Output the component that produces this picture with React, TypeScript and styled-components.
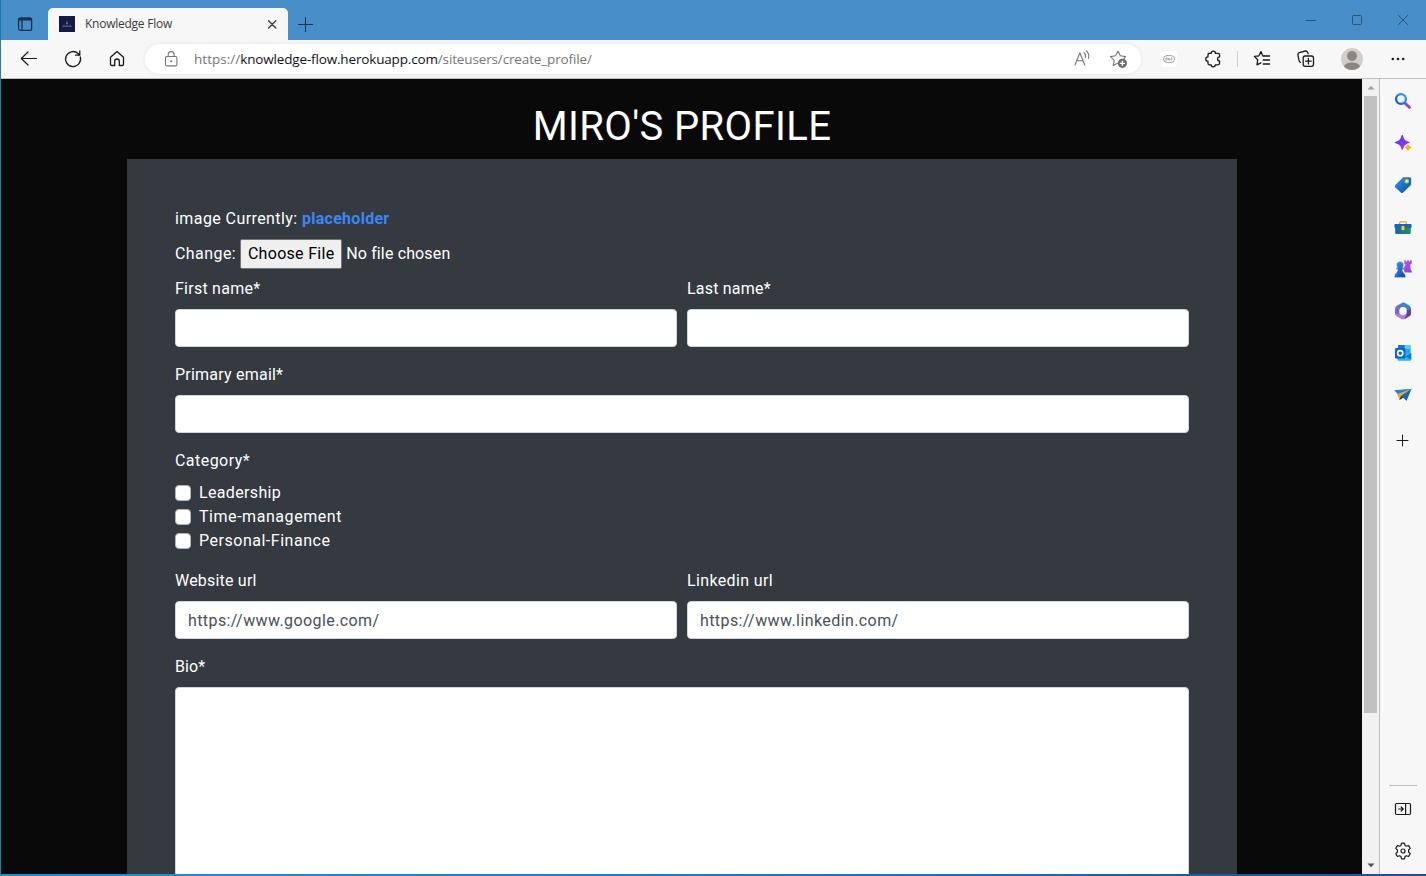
import React from "react";
import styled, { createGlobalStyle } from "styled-components";

const GlobalStyle = createGlobalStyle`
  *, *::before, *::after { box-sizing: border-box; }
  html, body { margin: 0; padding: 0; overflow: hidden; }
  svg { display: block; flex: none; }
`;

const ui = `"Open Sans", "Noto Sans", sans-serif`;
const site = `Roboto, "Liberation Sans", sans-serif`;

const Window = styled.div`
  width: 1426px;
  height: 876px;
  display: flex;
  flex-direction: column;
  border-left: 1px solid #1f7fa6;
  background: #f7f7f7;
  overflow: hidden;
  font-family: ${ui};
`;

const TitleBar = styled.header`
  height: 40px;
  flex: none;
  display: flex;
  align-items: flex-end;
  background: #488ec8;
  color: #17324a;
`;

const WorkspaceButton = styled.div`
  width: 47px;
  height: 32px;
  padding: 8px 0 0 16px;
`;

const Tab = styled.div`
  width: 240px;
  height: 32px;
  display: flex;
  align-items: center;
  padding: 0 10px 0 11px;
  border-radius: 5px 5px 0 0;
  background: #f7f7f7;
  color: #3b3b3b;
`;

const TabTitle = styled.span`
  flex: 1;
  margin-left: 10px;
  font-size: 12px;
  line-height: 16px;
  letter-spacing: -0.25px;
`;

const NewTab = styled.div`
  height: 32px;
  padding: 9px 0 0 10px;
`;

const WindowButtons = styled.div`
  margin-left: auto;
  align-self: flex-start;
  height: 40px;
  display: flex;
  align-items: center;
  gap: 34px;
  padding-right: 17px;
  color: #2c5678;
`;

const Toolbar = styled.div`
  height: 39px;
  flex: none;
  display: flex;
  align-items: center;
  background: #f7f7f7;
  border-bottom: 1px solid #bdbdbd;
  color: #1b1b1b;
`;

const NavButtons = styled.div`
  display: flex;
  width: 144px;
  padding-left: 18px;
  gap: 24px;
`;

const AddressBar = styled.div`
  width: 996px;
  height: 30px;
  display: flex;
  align-items: center;
  padding: 0 13px 0 17px;
  border-radius: 15px;
  background: #fff;
  box-shadow: 0 0 4px rgba(0, 0, 0, 0.08);
  color: #757575;
`;

const Url = styled.div`
  flex: 1;
  margin-left: 13px;
  padding-bottom: 1px;
  font-size: 13.5px;
  line-height: 20px;
  white-space: pre;
`;

const UrlPart = styled.span<{ $track: number; $host?: boolean }>`
  letter-spacing: ${(p) => p.$track}px;
  color: ${(p) => (p.$host ? "#111" : "#767676")};
`;

const AddressActions = styled.div`
  display: flex;
  gap: 16px;
`;

const ToolbarActions = styled.div`
  flex: 1;
  display: flex;
  align-items: center;
  padding-left: 20px;
`;

const Extension = styled.div`
  width: 16px;
  height: 16px;
  display: flex;
  align-items: center;
  justify-content: center;
  border-radius: 3px;
  background: #fff;
`;

const ToolSlot = styled.div<{ $gap: number }>`
  margin-left: ${(p) => p.$gap}px;
`;

const Divider = styled.div`
  width: 1px;
  height: 16px;
  margin-left: 14px;
  background: #cfcfcf;
`;

const Main = styled.div`
  flex: none;
  height: 795px;
  display: flex;
`;

const Page = styled.main`
  width: 1361px;
  flex: none;
  padding: 24px 125px 0 126px;
  overflow: hidden;
  background: #090909;
  color: #fff;
  font-family: ${site};
`;

const Heading = styled.h1`
  margin: 0 0 8px;
  text-align: center;
  font-size: 40px;
  line-height: 48px;
  font-weight: 400;
  letter-spacing: 0.38px;
`;

const Card = styled.form`
  height: 760px;
  padding: 48px;
  background: #343a40;
  font-size: 16px;
  line-height: 24px;
`;

const ImageLine = styled.div`
  margin-bottom: 8px;
`;

const ImageLink = styled.span`
  color: #3a86f4;
  font-weight: 700;
`;

const FileLine = styled.div`
  height: 30px;
  display: flex;
  align-items: center;
  gap: 4px;
  margin-bottom: 8px;
`;

const FileButton = styled.span`
  width: 102px;
  height: 30px;
  border: 1px solid #767676;
  border-radius: 2px;
  background: #efefef;
  color: #000;
  text-align: center;
  line-height: 28px;
`;

const FieldRow = styled.div`
  display: grid;
  grid-template-columns: 1fr 1fr;
  gap: 10px;
`;

const Field = styled.div`
  margin-bottom: 16px;
`;

const Label = styled.div`
  margin-bottom: 8px;
`;

const Txt = styled.span<{ $track?: number }>`
  letter-spacing: ${(p) => p.$track ?? 0.3}px;
  white-space: nowrap;
`;

const Input = styled.div<{ $height?: number }>`
  height: ${(p) => p.$height ?? 38}px;
  padding: 7px 12px 5px;
  border: 1px solid #ced4da;
  border-radius: 4px;
  background: #fff;
  color: #495057;
`;

const CheckRow = styled.div`
  height: 24px;
  display: flex;
  align-items: center;
  gap: 8px;
`;

const CheckBox = styled.span`
  width: 16px;
  height: 16px;
  border: 1px solid #adb5bd;
  border-radius: 4px;
  background: #fff;
`;

const ScrollTrack = styled.div`
  width: 17px;
  flex: none;
  display: flex;
  flex-direction: column;
  align-items: center;
  background: #f1f1f1;
`;

const ScrollArrow = styled.div`
  height: 17px;
  display: flex;
  align-items: center;
`;

const ScrollThumb = styled.div`
  width: 13px;
  height: 617px;
  margin-bottom: auto;
  background: #c1c1c1;
`;

const Sidebar = styled.aside`
  flex: 1;
  display: flex;
  flex-direction: column;
  align-items: center;
  padding-top: 13px;
  border-left: 1px solid #bdbdbd;
  background: #f7f7f7;
  color: #1b1b1b;
`;

const SideApps = styled.div`
  display: flex;
  flex-direction: column;
  gap: 24px;
  margin-bottom: 28px;
`;

const SideTools = styled.div`
  width: 28px;
  margin-top: auto;
  display: flex;
  flex-direction: column;
  align-items: center;
  gap: 24px;
  padding: 14px 0 14px;
  border-top: 1px solid #bdbdbd;
`;

const BottomEdge = styled.div`
  height: 2px;
  flex: none;
  background: linear-gradient(90deg, #1596cf, #1a7cc0 50%, #1a4f9e);
`;

const Icon = ({ size = 18, w = 1, children }: { size?: number; w?: number; children: React.ReactNode }) => (
  <svg width={size} height={size} viewBox={`0 0 ${size} ${size}`} fill="none" stroke="currentColor" strokeWidth={w} strokeLinecap="round" strokeLinejoin="round">
    {children}
  </svg>
);

const SearchIcon = () => (
  <Icon>
    <defs>
      <linearGradient id="lens" x1="0" y1="1" x2="1" y2="0">
        <stop stopColor="#1649c8" />
        <stop offset="1" stopColor="#3fa2ee" />
      </linearGradient>
    </defs>
    <path d="M11.4 11.6l4.2 3.8" stroke="#8a4bd6" strokeWidth="2.8" />
    <circle cx="7" cy="7" r="4.9" stroke="url(#lens)" strokeWidth="2.3" fill="#eaf6ff" />
  </Icon>
);

const SparkIcon = () => (
  <Icon>
    <defs>
      <linearGradient id="spark" x1="0" y1="0" x2="1" y2="1">
        <stop stopColor="#4b3fe0" />
        <stop offset="0.6" stopColor="#8a35ec" />
        <stop offset="1" stopColor="#c44be8" />
      </linearGradient>
    </defs>
    <path d="M8.2 .8Q9 .8 9.3 2.4Q10 6.4 14 7.4Q16 7.8 16 8.4T14 9.4Q10.2 10.4 9.3 14.2Q9 15.8 8.2 15.8T7.2 14.2Q6.4 10.4 2.4 9.4Q.6 9 .6 8.4T2.4 7.4Q6.4 6.4 7.2 2.4Q7.5 .8 8.2 .8Z" fill="url(#spark)" stroke="none" />
    <path d="M14 9.6Q15 12.6 18 13.6Q15 14.6 14 17.6Q13 14.6 10 13.6Q13 12.6 14 9.6Z" fill="#f7b50c" stroke="#f7f7f7" strokeWidth=".4" />
  </Icon>
);

const TagIcon = () => (
  <Icon>
    <defs>
      <linearGradient id="tag" x1="0" y1="0" x2="1" y2="1">
        <stop stopColor="#2f9be0" />
        <stop offset="1" stopColor="#0b4ba8" />
      </linearGradient>
    </defs>
    <path d="M9.2 1.2H15.8Q17.2 1.2 17.2 2.6V8.8L9.2 16.6Q8 17.6 6.8 16.6L1.3 11.4Q.2 10.2 1.3 9Z" fill="url(#tag)" stroke="none" />
    <circle cx="12.8" cy="5.2" r="1.6" fill="#fff2a8" stroke="#f0c419" strokeWidth="1.2" />
  </Icon>
);

const ToolboxIcon = () => (
  <Icon>
    <defs>
      <linearGradient id="box" x1="0" y1="0" x2="1" y2="0">
        <stop stopColor="#1560ba" />
        <stop offset="1" stopColor="#1c9a55" />
      </linearGradient>
    </defs>
    <path d="M5.6 6.4V4.8Q5.6 3.8 6.6 3.8H11.4Q12.4 3.8 12.4 4.8V6.4" stroke="#e7a726" strokeWidth="1.3" />
    <path d="M1.2 9H16.8V14.8Q16.8 16 15.6 16H2.4Q1.2 16 1.2 14.8Z" fill="url(#box)" stroke="none" />
    <rect x=".4" y="6" width="17.2" height="4" rx="1" fill="#1767bb" stroke="none" />
    <rect x="7.4" y="7.8" width="3.2" height="4.4" rx="1.3" fill="#f7c52e" stroke="none" />
  </Icon>
);

const ChessIcon = () => (
  <Icon>
    <defs>
      <linearGradient id="pawn" x1="0" y1="0" x2="1" y2="1">
        <stop stopColor="#3d9ae6" />
        <stop offset="1" stopColor="#0d47a3" />
      </linearGradient>
      <linearGradient id="rook" x1="0" y1="0" x2="1" y2="1">
        <stop stopColor="#c85bf0" />
        <stop offset="1" stopColor="#8a37d8" />
      </linearGradient>
    </defs>
    <path d="M10.2 .2H11.9V1.4H13.1V.2H14.9V1.4H16.1V.2H17.8V3.4L16.2 4.6L16.6 9.4L17.8 11.6V12.6H10.8L9.4 9L11.4 4.6L10.2 3.4Z" fill="url(#rook)" stroke="none" />
    <path d="M6 1.6A3.5 3.5 0 0 1 9.5 5.1Q9.5 6.6 8.4 7.6H9.8V9.2H8.4Q8.4 12 10.2 13.2Q11.6 14 11.6 17.6H.4Q.4 14 1.8 13.2Q3.6 12 3.6 9.2H2.2V7.6H3.6Q2.5 6.6 2.5 5.1A3.5 3.5 0 0 1 6 1.6Z" fill="url(#pawn)" stroke="#f7f7f7" strokeWidth=".3" />
  </Icon>
);

const OfficeIcon = () => (
  <Icon>
    <path d="M9 .4L3 3.6Q1 4.7 1 7V12Q2.5 14.8 5.6 13.2V7.4Q5.6 6.2 6.8 5.6L12.4 2.6Z" fill="#6a6fd0" stroke="none" />
    <path d="M1 11.6Q1.3 13.5 3 14.5L7.4 17Q9 17.8 10.6 17L16 13.8Q17 13 17 11.4L11.3 12.2L9 13.3L5.6 12Z" fill="#b57be0" stroke="none" />
    <path d="M9 .4Q10 .3 11 1L15.4 3.6Q17 4.7 17 7V11.6Q16 14.6 12.6 13.2V8Q12.6 6.4 11.2 5.6L6.6 4.4Z" fill="#3a86cc" stroke="none" />
    <path d="M12.6 8.6L17 7V12Q16.4 13.8 14.6 14.7L10.4 16.9L12.6 12.4Z" fill="#6b3f92" stroke="none" />
    <path d="M9 5.2L12.4 7.2V11L9 13L5.6 11V7.2Z" fill="#f7f7f7" stroke="none" />
  </Icon>
);

const OutlookIcon = () => (
  <Icon>
    <rect x="4.2" y="1" width="12.4" height="11" rx="1" fill="#2aa5e8" stroke="none" />
    <path d="M10.4 1H15.6Q16.6 1 16.6 2V5H10.4Z" fill="#55cdf5" stroke="none" />
    <path d="M4.2 1H10.4V5H4.2Z" fill="#1277c8" stroke="none" />
    <path d="M3.4 8.6L17.2 9.2V15.6Q17.2 16.8 16 16.8H4.6Q3.4 16.8 3.4 15.6Z" fill="#2ab6ee" stroke="none" />
    <path d="M17.2 9L11.5 12.6L17.2 15.8Z" fill="#137ac2" stroke="none" />
    <rect x="1" y="4" width="10.4" height="10.4" rx="1.2" fill="#0c68c4" stroke="none" />
    <circle cx="6.2" cy="9.2" r="2.6" stroke="#fff" strokeWidth="1.6" />
  </Icon>
);

const PlaneIcon = () => (
  <Icon>
    <path d="M.2 4.2L17.6 2.8L5 9.4Z" fill="#1e86d6" stroke="none" />
    <path d="M3.2 8.2L17.6 2.8L5.4 14Z" fill="#f5a81c" stroke="none" />
    <path d="M5.4 14.2L7 9.8L9.4 11.6Z" fill="#372a72" stroke="none" />
    <path d="M17.6 2.8L12.6 14.8L6.8 10Z" fill="#1268c0" stroke="none" />
  </Icon>
);

const PanelIcon = () => (
  <Icon w={1.2}>
    <rect x="1.5" y="3.5" width="15" height="11" rx="1.2" />
    <path d="M11.6 3.6V14.4M4.6 9H9M7.2 7L9.2 9L7.2 11" />
  </Icon>
);

const GearIcon = () => (
  <Icon w={1.2}>
    <path d="M7.4 1.4Q9 .9 10.6 1.4L11 3.5L12.3 4.2L14.4 3.5Q15.6 4.7 16.2 6.4L14.6 8V10L16.2 11.6Q15.6 13.3 14.4 14.5L12.3 13.8L11 14.5L10.6 16.6Q9 17.1 7.4 16.6L7 14.5L5.7 13.8L3.6 14.5Q2.4 13.3 1.8 11.6L3.4 10V8L1.8 6.4Q2.4 4.7 3.6 3.5L5.7 4.2L7 3.5Z" />
    <circle cx="9" cy="9" r="2" />
  </Icon>
);

export default function App() {
  return (
    <>
      <GlobalStyle />
      <Window>
        <TitleBar>
          <WorkspaceButton>
            <Icon size={16} w={1.3}>
              <rect x="1.6" y="1.8" width="13" height="12.6" rx="2" />
              <path d="M2.4 3.2H13.8" strokeWidth="2.4" />
              <path d="M5 4V14" />
            </Icon>
          </WorkspaceButton>
          <Tab>
            <svg width="16" height="16" viewBox="0 0 16 16">
              <rect width="16" height="16" fill="#161941" />
              <path d="M3 10.5H13M4 9.4H6M7 9.4H9M10 9.4H12" stroke="#5c6184" strokeWidth=".8" />
              <path d="M8 5V8.5M7 7.5H9" stroke="#777b99" strokeWidth=".8" />
            </svg>
            <TabTitle>Knowledge Flow</TabTitle>
            <Icon size={12} w={1.4}>
              <path d="M2.6 2.7L9.8 9.9M9.8 2.7L2.6 9.9" />
            </Icon>
          </Tab>
          <NewTab>
            <Icon size={15}>
              <path d="M.5 7.5H14.5M7.5 .5V14.5" />
            </Icon>
          </NewTab>
          <WindowButtons>
            <Icon size={12}><path d="M1 6.5H10.5" /></Icon>
            <Icon size={12}><rect x="1.5" y="1.5" width="9" height="9" rx="1" /></Icon>
            <Icon size={12}><path d="M1.2 1.2L10.8 10.8M10.8 1.2L1.2 10.8" /></Icon>
          </WindowButtons>
        </TitleBar>

        <Toolbar>
          <NavButtons>
            <Icon size={20} w={1.2}><path d="M17.5 9.5H2.5M9 3L2.3 9.5L9 16" /></Icon>
            <Icon size={20} w={1.3}><path d="M17.3 8A7.5 7.5 0 1 1 14.9 4.3L16.6 6M16.8 2V6.2H12.6" /></Icon>
            <Icon size={20} w={1.3}><path d="M3.5 8.3L10 2.4L16.5 8.3V15.2Q16.5 16.5 15.2 16.5H12.3V12.2Q12.3 10 10 10T7.7 12.2V16.5H4.8Q3.5 16.5 3.5 15.2Z" /></Icon>
          </NavButtons>
          <AddressBar>
            <Icon size={19} w={1.1}>
              <rect x="3.5" y="6.5" width="11.4" height="9.4" rx="1.4" />
              <path d="M6.2 6.3V4.6A3 3 0 0 1 12.2 4.6V6.3" />
              <circle cx="9.2" cy="11.2" r=".5" fill="currentColor" />
            </Icon>
            <Url>
              <UrlPart $track={0.02}>https://</UrlPart>
              <UrlPart $host $track={-0.16}>knowledge-flow.herokuapp.com</UrlPart>
              <UrlPart $track={-0.14}>/siteusers/create_profile/</UrlPart>
            </Url>
            <AddressActions>
              <Icon size={20} w={1.1}>
                <path d="M3 16L7.9 3.8L12.7 16M4.8 11.8H11M12 3.5Q14 5.6 13.4 8.6M14.2 1.6Q18 5 16.4 9.4" />
              </Icon>
              <Icon size={20} w={1.1}>
                <path d="M15.8 9.8L17.6 7.6L12.3 6.8L10 2L7.6 6.8L2.4 7.6L6.2 11.3L5.2 16.5L9.4 14.3" />
                <circle cx="14.4" cy="14.3" r="4.6" fill="#6b6b6b" stroke="none" />
                <path d="M12.2 14.3H16.6M14.4 12.1V16.5" stroke="#fff" strokeWidth="1.2" />
              </Icon>
            </AddressActions>
          </AddressBar>
          <ToolbarActions>
            <Extension>
              <Icon size={14} w={0.8}>
                <rect x="1.6" y="3.6" width="11" height="6.8" rx="3.4" stroke="#8b8b8b" />
                <path d="M4 8.6V6H5.2V7.4M6.6 6.2V8H8V6.6M9.6 5.6V8.2" stroke="#929292" />
              </Icon>
            </Extension>
            <ToolSlot $gap={26}>
              <Icon size={20} w={1.3}>
                <path d="M5.3 4.4H8.1A2.2 2.2 0 0 1 12.5 4.4H14.8Q16.6 4.4 16.6 6V7.9A2 2 0 0 0 16.6 12V14Q16.6 15.8 14.8 15.8H12.3A2 2 0 0 1 8.2 15.8H6.6Q5 15.8 5 14.2V12.2A2.2 2.2 0 0 1 5 7.8V5.8Q5 4.4 6.4 4.4" />
              </Icon>
            </ToolSlot>
            <Divider />
            <ToolSlot $gap={14}>
              <Icon size={20} w={1.3}>
                <path d="M12.3 7H10.8L8.9 2.6L6.9 6.8L2.4 7.4L5.7 10.8L5 15.8L8.8 13.8M12.4 7H17.6M11.2 11H17.6M11.2 15H17.6" />
              </Icon>
            </ToolSlot>
            <ToolSlot $gap={24}>
              <Icon size={20} w={1.3}>
                <rect x="7.2" y="7" width="10.3" height="10.3" rx="2" />
                <path d="M12.4 9.4V15M9.6 12.2H15.2M4.6 13.4Q3.4 13 3 11.6L1.9 5.6Q1.8 4.1 3.2 3.6L9.4 2Q10.9 1.8 11.6 3.2L12.1 4.8" />
              </Icon>
            </ToolSlot>
            <ToolSlot $gap={25}>
              <svg width="22" height="22" viewBox="0 0 22 22">
                <clipPath id="avatar"><circle cx="11" cy="11" r="11" /></clipPath>
                <circle cx="11" cy="11" r="11" fill="#d1cfcc" />
                <circle cx="11" cy="8" r="5" fill="#8b8682" />
                <ellipse cx="11" cy="19.4" rx="8.2" ry="5" fill="#8b8682" clipPath="url(#avatar)" />
              </svg>
            </ToolSlot>
            <ToolSlot $gap={27}>
              <Icon size={16}>
                <g fill="currentColor" stroke="none">
                  <circle cx="2.8" cy="8" r="1.3" /><circle cx="8" cy="8" r="1.3" /><circle cx="13.2" cy="8" r="1.3" />
                </g>
              </Icon>
            </ToolSlot>
          </ToolbarActions>
        </Toolbar>

        <Main>
          <Page>
            <Heading>MIRO'S PROFILE</Heading>
            <Card>
              <ImageLine>
                <Txt $track={0.42}>image Currently: </Txt>
                <ImageLink><Txt $track={0.27}>placeholder</Txt></ImageLink>
              </ImageLine>
              <FileLine>
                <Txt $track={0.44}>Change:</Txt>
                <FileButton><Txt>Choose File</Txt></FileButton>
                <Txt $track={0.14}>No file chosen</Txt>
              </FileLine>
              <FieldRow>
                <Field>
                  <Label><Txt $track={0.25}>First name*</Txt></Label>
                  <Input />
                </Field>
                <Field>
                  <Label><Txt $track={0.2}>Last name*</Txt></Label>
                  <Input />
                </Field>
              </FieldRow>
              <Field>
                <Label><Txt $track={0.22}>Primary email*</Txt></Label>
                <Input />
              </Field>
              <Field>
                <Label><Txt $track={0.45}>Category*</Txt></Label>
                <CheckRow><CheckBox /><Txt $track={0.35}>Leadership</Txt></CheckRow>
                <CheckRow><CheckBox /><Txt $track={0.55}>Time-management</Txt></CheckRow>
                <CheckRow><CheckBox /><Txt $track={0.52}>Personal-Finance</Txt></CheckRow>
              </Field>
              <FieldRow>
                <Field>
                  <Label><Txt $track={0.2}>Website url</Txt></Label>
                  <Input><Txt $track={0.41}>https://www.google.com/</Txt></Input>
                </Field>
                <Field>
                  <Label><Txt $track={0.36}>Linkedin url</Txt></Label>
                  <Input><Txt $track={0.41}>https://www.linkedin.com/</Txt></Input>
                </Field>
              </FieldRow>
              <Label><Txt $track={0.1}>Bio*</Txt></Label>
              <Input $height={262} />
            </Card>
          </Page>
          <ScrollTrack>
            <ScrollArrow>
              <svg width="8" height="5" viewBox="0 0 8 5"><path d="M0.5 4.5L4 .8L7.5 4.5Z" fill="#a3a3a3" /></svg>
            </ScrollArrow>
            <ScrollThumb />
            <ScrollArrow>
              <svg width="8" height="5" viewBox="0 0 8 5"><path d="M0.5 .5L4 4.2L7.5 .5Z" fill="#505050" /></svg>
            </ScrollArrow>
          </ScrollTrack>
          <Sidebar>
            <SideApps>
              <SearchIcon />
              <SparkIcon />
              <TagIcon />
              <ToolboxIcon />
              <ChessIcon />
              <OfficeIcon />
              <OutlookIcon />
              <PlaneIcon />
            </SideApps>
            <Icon size={18}><path d="M3 8.5H14M8.5 3V14" /></Icon>
            <SideTools>
              <PanelIcon />
              <GearIcon />
            </SideTools>
          </Sidebar>
        </Main>
        <BottomEdge />
      </Window>
    </>
  );
}
